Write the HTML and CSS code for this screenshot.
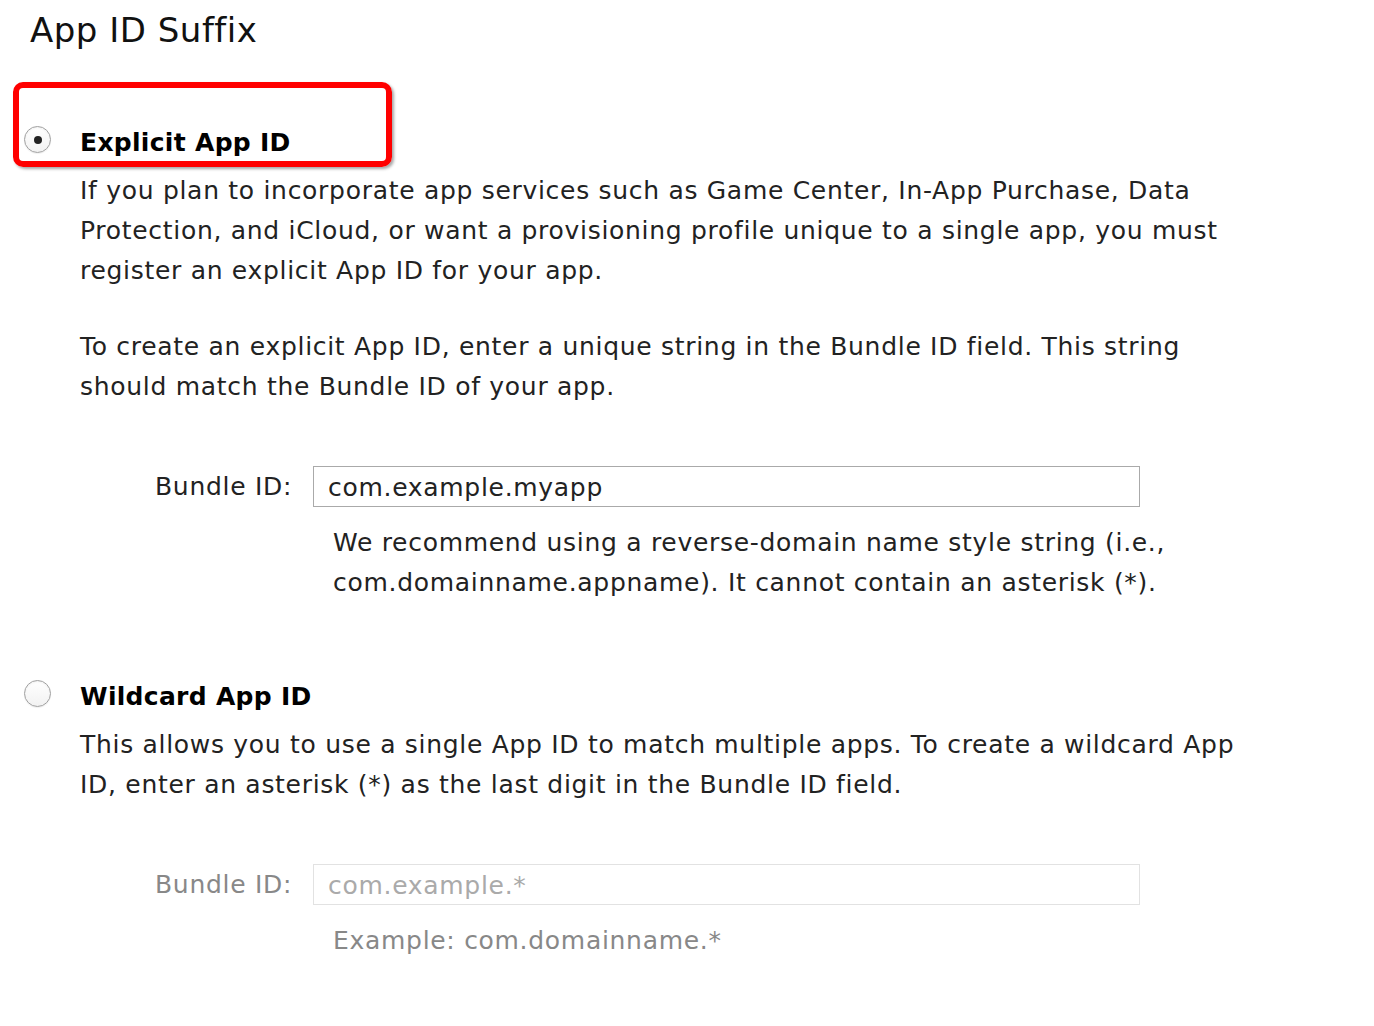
FILE: index.html
```html
<!DOCTYPE html>
<html>
<head>
<meta charset="utf-8">
<link rel="stylesheet" href="styles.css">
</head>
<body>
<div class="page">
  <h1 class="title">App ID Suffix</h1>

  <section class="option first">
    <div class="highlight"></div>
    <div class="option-head">
      <span class="radio checked"><span class="dot"></span></span>
      <h2 class="option-title">Explicit App ID</h2>
    </div>
    <div class="option-body">
      <p class="desc">If you plan to incorporate app services such as Game Center, In-App Purchase, Data Protection, and iCloud, or want a provisioning profile unique to a single app, you must register an explicit App ID for your app.</p>
      <p class="desc">To create an explicit App ID, enter a unique string in the Bundle ID field. This string should match the Bundle ID of your app.</p>
      <div class="field">
        <label class="field-label">Bundle ID:</label>
        <div class="field-main">
          <div class="input">com.example.myapp</div>
          <p class="hint">We recommend using a reverse-domain name style string (i.e., com.domainname.appname). It cannot contain an asterisk (*).</p>
        </div>
      </div>
    </div>
  </section>

  <section class="option second">
    <div class="option-head">
      <span class="radio"></span>
      <h2 class="option-title">Wildcard App ID</h2>
    </div>
    <div class="option-body">
      <p class="desc">This allows you to use a single App ID to match multiple apps. To create a wildcard App ID, enter an asterisk (*) as the last digit in the Bundle ID field.</p>
      <div class="field disabled">
        <label class="field-label">Bundle ID:</label>
        <div class="field-main">
          <div class="input placeholder">com.example.*</div>
          <p class="hint">Example: com.domainname.*</p>
        </div>
      </div>
    </div>
  </section>
</div>
</body>
</html>
```
FILE: styles.css
```css
* { box-sizing: border-box; }
html, body { margin: 0; padding: 0; background: #fff; }
body {
  font-family: "DejaVu Sans", "Liberation Sans", sans-serif;
  color: #222;
}
.page {
  width: 1374px;
  padding-top: 8px;
}
.title {
  margin: 0 0 0 30px;
  font-size: 34px;
  font-weight: normal;
  letter-spacing: 0.5px;
  color: #111;
  line-height: 44px;
}
.option { position: relative; }
.option.first { margin-top: 76px; }
.option.second { margin-top: 79px; }
.highlight {
  position: absolute;
  left: 13px;
  top: -46px;
  width: 379px;
  height: 85px;
  border: 6px solid #f00;
  border-radius: 10px;
  box-shadow: 2px 2px 3px rgba(0,0,0,0.35);
}
.option-head {
  display: flex;
  align-items: flex-start;
  padding-left: 24px;
  height: 30px;
}
.radio {
  width: 27px;
  height: 27px;
  margin-top: -2px;
  border-radius: 50%;
  border: 1px solid #a0a0a0;
  background: linear-gradient(#fff, #f2f2f2);
  box-shadow: inset 0 1px 2px rgba(0,0,0,0.06), 0 1px 1px rgba(0,0,0,0.06);
  display: flex;
  align-items: center;
  justify-content: center;
  flex: none;
}
.dot {
  width: 8px;
  height: 8px;
  border-radius: 50%;
  background: #222;
}
.option-title {
  margin: 0 0 0 29px;
  font-size: 25px;
  font-weight: bold;
  letter-spacing: 0.3px;
  color: #000;
  line-height: 30px;
}
.option-body {
  padding-left: 80px;
  width: 1340px;
  padding-right: 80px;
}
.desc {
  margin: 13px 0 0 0;
  font-size: 25px;
  letter-spacing: 0.7px;
  line-height: 40px;
  color: #222;
}
.desc + .desc { margin-top: 36px; }
.field {
  display: flex;
  align-items: flex-start;
  margin: 59px 0 0 75px;
}
.field-label {
  font-size: 25px;
  letter-spacing: 0.7px;
  line-height: 41px;
  color: #222;
  width: 158px;
  flex: none;
}
.field-main { width: 827px; }
.input {
  height: 41px;
  border: 1px solid #aaa;
  font-size: 25px;
  letter-spacing: 0.7px;
  line-height: 41px;
  padding-left: 14px;
  color: #222;
}
.hint {
  margin: 16px 0 0 20px;
  width: 900px;
  font-size: 25px;
  letter-spacing: 0.7px;
  line-height: 40px;
  color: #222;
}
.field.disabled .field-label { color: #888; }
.field.disabled .input { border-color: #e2e2e2; color: #aaa; }
.field.disabled .hint { color: #888; }
```
